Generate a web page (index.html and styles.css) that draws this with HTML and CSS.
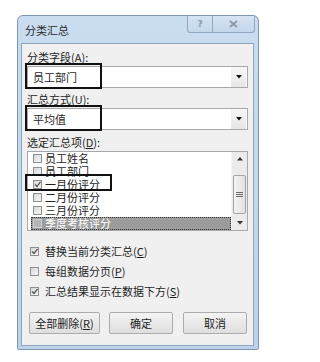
FILE: index.html
```html
<!DOCTYPE html>
<html lang="zh-CN">
<head>
<meta charset="utf-8">
<title>分类汇总</title>
<link rel="stylesheet" href="styles.css">
</head>
<body>
<div class="window">
  <div class="titlebar">
    <span class="title">分类汇总</span>
    <div class="caption-btns">
      <div class="cbtn help">?</div>
      <div class="cbtn close">
        <svg width="9" height="8" viewBox="0 0 9 8"><path d="M1 1 L8 7 M8 1 L1 7" stroke="#8a98aa" stroke-width="1.8" fill="none"/></svg>
      </div>
    </div>
  </div>
  <div class="client">
    <div class="label">分类字段(<u>A</u>):</div>
    <div class="combo">
      <span class="combo-text">员工部门</span>
      <span class="drop"><svg width="6" height="4" viewBox="0 0 6 4"><path d="M0 0 H6 L3 3.5 Z" fill="#111"/></svg></span>
      <div class="mark mark-combo"></div>
    </div>
    <div class="label label-2">汇总方式(<u>U</u>):</div>
    <div class="combo">
      <span class="combo-text">平均值</span>
      <span class="drop"><svg width="6" height="4" viewBox="0 0 6 4"><path d="M0 0 H6 L3 3.5 Z" fill="#111"/></svg></span>
      <div class="mark mark-combo"></div>
    </div>
    <div class="label label-3">选定汇总项(<u>D</u>):</div>
    <div class="listbox">
      <div class="items">
        <div class="item"><span class="cb"></span><span class="item-text">员工姓名</span></div>
        <div class="item"><span class="cb"></span><span class="item-text">员工部门</span></div>
        <div class="item"><span class="cb checked"><svg width="7" height="7" viewBox="0 0 7 7"><path d="M1 3.5 L3 5.5 L6.5 0.8" stroke="#555" stroke-width="1.3" fill="none"/></svg></span><span class="item-text">一月份评分</span><div class="mark mark-item"></div></div>
        <div class="item"><span class="cb"></span><span class="item-text">二月份评分</span></div>
        <div class="item"><span class="cb"></span><span class="item-text">三月份评分</span></div>
        <div class="item selected"><span class="cb"></span><span class="item-text">季度考核评分</span></div>
      </div>
      <div class="scrollbar">
        <div class="sb-btn"><svg width="6" height="4" viewBox="0 0 6 4"><path d="M0 3.5 H6 L3 0 Z" fill="#333"/></svg></div>
        <div class="sb-thumb"><span class="grip"></span><span class="grip"></span><span class="grip"></span></div>
        <div class="sb-btn sb-down"><svg width="6" height="4" viewBox="0 0 6 4"><path d="M0 0 H6 L3 3.5 Z" fill="#333"/></svg></div>
      </div>
    </div>
    <div class="options">
      <div class="opt"><span class="cb checked"><svg width="7" height="7" viewBox="0 0 7 7"><path d="M1 3.5 L3 5.5 L6.5 0.8" stroke="#555" stroke-width="1.3" fill="none"/></svg></span><span>替换当前分类汇总(<u>C</u>)</span></div>
      <div class="opt"><span class="cb"></span><span>每组数据分页(<u>P</u>)</span></div>
      <div class="opt"><span class="cb checked"><svg width="7" height="7" viewBox="0 0 7 7"><path d="M1 3.5 L3 5.5 L6.5 0.8" stroke="#555" stroke-width="1.3" fill="none"/></svg></span><span>汇总结果显示在数据下方(<u>S</u>)</span></div>
    </div>
    <div class="buttons">
      <div class="btn btn-wide">全部删除(<u>R</u>)</div>
      <div class="btn">确定</div>
      <div class="btn">取消</div>
    </div>
  </div>
</div>
</body>
</html>
```

FILE: styles.css
```css
* { box-sizing: border-box; }
html, body { margin: 0; padding: 0; background: #ffffff; }
body {
  font-family: "Noto Sans CJK SC", "Noto Sans", sans-serif;
  font-size: 11px;
  color: #1e1e1e;
}
u { text-decoration: underline; text-underline-offset: 1px; }

.window {
  margin: 15px 0 0 17px;
  width: 242px;
  height: 335px;
  border: 1px solid #7f97b2;
  border-radius: 6px 6px 2px 2px;
  background: linear-gradient(#c9dcf0, #bdd2ea);
  padding: 0 4px 3px 3px;
  display: flex;
  flex-direction: column;
}

.titlebar {
  height: 27px;
  display: flex;
  align-items: flex-start;
  justify-content: space-between;
  flex-shrink: 0;
}
.title {
  margin: 7px 0 0 4px;
  line-height: 14px;
  font-size: 11px;
  color: #2a2a2a;
}
.caption-btns {
  display: flex;
  margin-right: -1px;
}
.cbtn {
  height: 17px;
  border: 1px solid #90a8c2;
  border-top: none;
  background: linear-gradient(#d6e4f3, #c3d6eb);
  display: flex;
  align-items: center;
  justify-content: center;
  color: #8a98aa;
  font-family: "DejaVu Sans", sans-serif;
  font-size: 9px;
  font-weight: bold;
}
.help { width: 26px; border-radius: 0 0 0 3px; }
.close { width: 42px; border-left: none; border-radius: 0 0 3px 0; }

.client {
  flex: 1;
  background: #f0f0f0;
  border: 1px solid #8ea5bf;
  padding: 0 5px;
  display: flex;
  flex-direction: column;
}

.label {
  line-height: 14px;
  margin-top: 6px;
  padding-left: 0;
}
.label-2 { margin-top: 4px; }
.label-3 { margin-top: 5px; }

.combo {
  position: relative;
  margin-top: 2px;
  height: 22px;
  background: #ffffff;
  border: 1px solid #a6a8ad;
  display: flex;
  align-items: center;
  justify-content: space-between;
}
.combo-text {
  padding-left: 5px;
  line-height: 14px;
  font-size: 11px;
}
.drop {
  width: 15px;
  height: 20px;
  margin-right: 1px;
  background: linear-gradient(#f7f7f7, #e6e6e6);
  display: flex;
  align-items: center;
  justify-content: center;
}

.mark {
  position: absolute;
  border: 2px solid #111111;
  pointer-events: none;
}
.mark-combo { left: -3px; top: -4px; width: 77px; height: 26px; }
.mark-item { left: -6px; top: -4px; width: 87px; height: 17px; }

.listbox {
  margin-top: 2px;
  height: 80px;
  background: #ffffff;
  border: 1px solid #a6a8ad;
  display: flex;
}
.items {
  flex: 1;
  padding: 0 0 0 3px;
}
.item {
  position: relative;
  height: 13px;
  display: flex;
  align-items: center;
  padding-left: 2px;
}
.item-text {
  margin-left: 3px;
  line-height: 13px;
}
.item.selected {
  background: #9c9c9c;
  color: #ffffff;
  outline: 1px dotted #333;
  outline-offset: -1px;
}

.cb {
  width: 9px;
  height: 9px;
  border: 1px solid #8e8f8f;
  background: linear-gradient(135deg, #d8d8d8, #f6f6f6);
  display: flex;
  align-items: center;
  justify-content: center;
  flex-shrink: 0;
}
.item.selected .cb { border-color: #d0d0d0; background: #b5b5b5; }

.scrollbar {
  width: 16px;
  background: #ebebeb;
  border-left: 1px solid #f4f4f4;
  display: flex;
  flex-direction: column;
}
.sb-btn {
  height: 14px;
  display: flex;
  align-items: center;
  justify-content: center;
}
.sb-down { margin-top: auto; }
.sb-thumb {
  margin: 9px 1px 0 1px;
  height: 39px;
  border: 1px solid #a3a3a3;
  border-radius: 2px;
  background: linear-gradient(90deg, #f2f2f2, #e2e2e2);
  display: flex;
  flex-direction: column;
  align-items: center;
  justify-content: center;
  gap: 1px;
}
.grip {
  width: 7px;
  height: 1px;
  background: #6a6a6a;
}

.options {
  margin-top: 10px;
  display: flex;
  flex-direction: column;
}
.opt {
  height: 20px;
  display: flex;
  align-items: center;
  padding-left: 3px;
  line-height: 14px;
}
.opt .cb { margin-right: 6px; }

.buttons {
  margin-top: 11px;
  display: flex;
  padding-left: 2px;
  gap: 9px;
}
.btn {
  width: 64px;
  height: 22px;
  border: 1px solid #acacac;
  border-radius: 2px;
  background: linear-gradient(#f4f4f4, #dedede);
  display: flex;
  align-items: center;
  justify-content: center;
  line-height: 14px;
}
.btn-wide { width: 71px; }
.buttons .btn:last-child { margin-left: 1px; }
```
